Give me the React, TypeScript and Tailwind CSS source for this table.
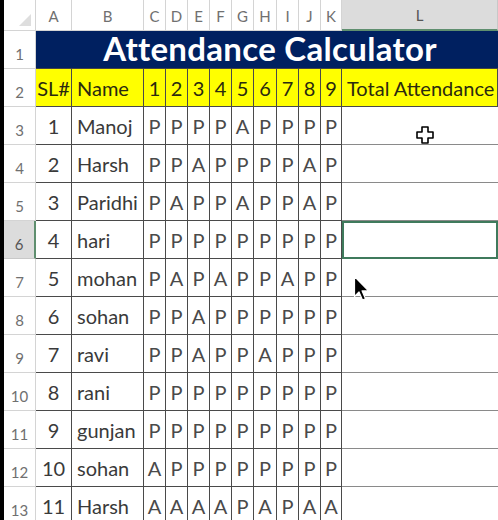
import React from "react";

const cols = ["A", "B", "C", "D", "E", "F", "G", "H", "I", "J", "K", "L"];
const colW = [36, 72, 22, 22, 22, 22, 22, 23, 22, 22, 21, 156];

const rows: [number, string, string][] = [
  [1, "Manoj", "PPPPAPPPP"],
  [2, "Harsh", "PPAPPPPAP"],
  [3, "Paridhi", "PAPPAPPAP"],
  [4, "hari", "PPPPPPPPP"],
  [5, "mohan", "PAPAPPAPP"],
  [6, "sohan", "PPAPPPPPP"],
  [7, "ravi", "PPAPPAPPP"],
  [8, "rani", "PPPPPPPPP"],
  [9, "gunjan", "PPPPPPPPP"],
  [10, "sohan", "APPPPPPPP"],
  [11, "Harsh", "AAAAPAPAA"],
];

const font = { fontFamily: "Lato, 'Open Sans', sans-serif" };

export default function App() {
  return (
    <div className="relative flex h-[520px] w-[498px] overflow-hidden bg-white" style={font}>
      <div className="w-[4px] shrink-0 bg-black" />
      <div className="flex w-[494px] flex-col">
        {/* column header row */}
        <div className="flex h-[31px] shrink-0">
          <div className="relative w-[32px] shrink-0 border-b border-r border-[#d4d4d4] bg-white">
            <div className="absolute bottom-[4px] right-[4px] h-0 w-0 border-b-[12px] border-l-[12px] border-b-[#dedede] border-l-transparent" />
          </div>
          {cols.map((c, i) => (
            <div
              key={c}
              style={{ width: colW[i] }}
              className={
                "flex shrink-0 items-center justify-center pt-[2px] text-[15px] " +
                (c === "L"
                  ? "border-b-2 border-b-[#5f8f6f] border-r border-r-[#c8c8c8] bg-[#dcdcdc] text-[#555]"
                  : "border-b border-r border-[#d4d4d4] bg-white text-[#707070]")
              }
            >
              {c}
            </div>
          ))}
        </div>

        {/* Row 1 title */}
        <div className="flex h-[38px] shrink-0">
          <div className="flex w-[32px] shrink-0 items-end justify-center border-b border-r border-[#d4d4d4] pb-[3px] text-[15px] text-[#707070]">
            1
          </div>
          <div className="flex flex-1 items-center justify-center border-b border-[#444] bg-[#002060] pb-[2px] pl-[6px] text-[33px] font-bold leading-none tracking-[0.3px] text-white">
            Attendance Calculator
          </div>
        </div>

        {/* Row 2 headers */}
        <div className="flex h-[38px] shrink-0">
          <div className="flex w-[32px] shrink-0 items-end justify-center border-b border-r border-[#d4d4d4] pb-[3px] text-[15px] text-[#707070]">
            2
          </div>
          {["SL#", "Name", "1", "2", "3", "4", "5", "6", "7", "8", "9", "Total Attendance"].map((t, i) => (
            <div
              key={i}
              style={{ width: colW[i] }}
              className={
                "flex shrink-0 items-center whitespace-nowrap border-b border-r border-[#4a4a4a] bg-[#ffff00] text-[20px] text-[#2a2a10] " +
                (i === 1 || i === 11 ? "justify-start pl-[5px]" : "justify-center")
              }
            >
              {t}
            </div>
          ))}
        </div>

        {/* data rows */}
        {rows.map(([n, name, vals], ri) => {
          const rowNum = ri + 3;
          const sel = rowNum === 6;
          return (
            <div key={ri} className="flex h-[38px] shrink-0">
              <div
                className={
                  "flex w-[32px] shrink-0 items-end justify-center pb-[3px] text-[15px] " +
                  (sel
                    ? "border-b border-b-[#c8c8c8] border-r-2 border-r-[#5f8f6f] bg-[#dcdcdc] text-[#555]"
                    : "border-b border-r border-[#d4d4d4] text-[#707070]")
                }
              >
                {rowNum}
              </div>
              <div
                style={{ width: colW[0] }}
                className="flex shrink-0 items-center justify-center border-b border-r border-[#4a4a4a] text-[20px] text-[#3a3a3a]"
              >
                {n}
              </div>
              <div
                style={{ width: colW[1] }}
                className="flex shrink-0 items-center justify-start border-b border-r border-[#4a4a4a] pl-[5px] text-[20px] text-[#3a3a3a]"
              >
                {name}
              </div>
              {vals.split("").map((v, vi) => (
                <div
                  key={vi}
                  style={{ width: colW[vi + 2] }}
                  className="flex shrink-0 items-center justify-center border-b border-r border-[#4a4a4a] text-[20px] text-[#4a4a4a]"
                >
                  {v}
                </div>
              ))}
              <div
                style={{ width: colW[11] }}
                className={
                  "shrink-0 " +
                  (sel
                    ? "border-2 border-[#3f7a5c]"
                    : "border-b border-[#8a8a8a]")
                }
              />
            </div>
          );
        })}
      </div>

      {/* plus cursor */}
      <svg className="absolute left-[416px] top-[126px]" width="18" height="18" viewBox="0 0 18 18">
        <path
          d="M6 1h6v5h5v6h-5v5H6v-5H1V6h5z"
          fill="white"
          stroke="black"
          strokeWidth="1.6"
          strokeLinejoin="round"
        />
      </svg>
      {/* arrow cursor */}
      <svg className="absolute left-[353px] top-[275px]" width="18" height="28" viewBox="0 0 18 28">
        <path
          d="M1.5 1.5v20l4.5-4.5 3.5 8 3-1.3-3.4-7.8h6.4z"
          fill="black"
          stroke="white"
          strokeWidth="1.2"
          strokeLinejoin="round"
        />
      </svg>
    </div>
  );
}
